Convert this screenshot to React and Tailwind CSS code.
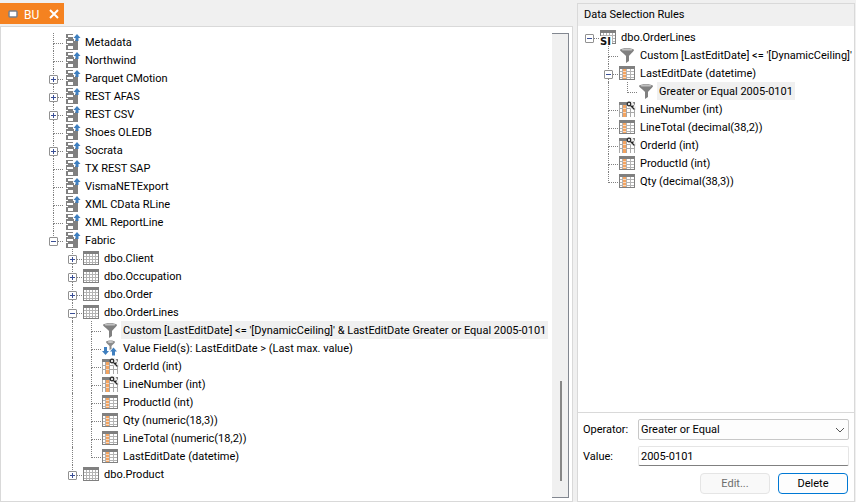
import React, { useState } from "react";

const sourceTree = [
  { type: "source", label: "Metadata" },
  { type: "source", label: "Northwind" },
  { type: "source", label: "Parquet CMotion", state: "closed" },
  { type: "source", label: "REST AFAS", state: "closed" },
  { type: "source", label: "REST CSV", state: "closed" },
  { type: "source", label: "Shoes OLEDB" },
  { type: "source", label: "Socrata", state: "closed" },
  { type: "source", label: "TX REST SAP" },
  { type: "source", label: "VismaNETExport" },
  { type: "source", label: "XML CData RLine" },
  { type: "source", label: "XML ReportLine" },
  {
    type: "source",
    label: "Fabric",
    state: "open",
    children: [
      { type: "table", label: "dbo.Client", state: "closed" },
      { type: "table", label: "dbo.Occupation", state: "closed" },
      { type: "table", label: "dbo.Order", state: "closed" },
      {
        type: "table",
        label: "dbo.OrderLines",
        state: "open",
        children: [
          {
            type: "filter",
            label: "Custom [LastEditDate] <= '[DynamicCeiling]' & LastEditDate Greater or Equal 2005-0101",
            selected: true,
          },
          { type: "increment", label: "Value Field(s): LastEditDate > (Last max. value)" },
          { type: "key", label: "OrderId (int)" },
          { type: "key", label: "LineNumber (int)" },
          { type: "column", label: "ProductId (int)" },
          { type: "column", label: "Qty (numeric(18,3))" },
          { type: "column", label: "LineTotal (numeric(18,2))" },
          { type: "column", label: "LastEditDate (datetime)" },
        ],
      },
      { type: "table", label: "dbo.Product", state: "closed" },
    ],
  },
];

const ruleTree = [
  {
    type: "si",
    label: "dbo.OrderLines",
    state: "open",
    root: true,
    children: [
      { type: "filter", label: "Custom [LastEditDate] <= '[DynamicCeiling]'" },
      {
        type: "column",
        label: "LastEditDate (datetime)",
        state: "open",
        children: [{ type: "filter", label: "Greater or Equal 2005-0101", selected: true }],
      },
      { type: "key", label: "LineNumber (int)" },
      { type: "column", label: "LineTotal (decimal(38,2))" },
      { type: "key", label: "OrderId (int)" },
      { type: "column", label: "ProductId (int)" },
      { type: "column", label: "Qty (decimal(38,3))" },
    ],
  },
];

const Grid = ({ column }) => (
  <g shapeRendering="crispEdges">
    <rect x="1" y="2" width="16" height="14" fill="#808080" />
    <rect x="2" y="5" width="14" height="10" fill="#fff" />
    {column && <rect x="5" y="5" width="3" height="10" fill="#f4a460" />}
    <path
      d={
        column
          ? "M4.5 5v10M8.5 5v10M12.5 5v10M2 7.5h3M2 10.5h3M2 13.5h3M8 7.5h8M8 10.5h8M8 13.5h8"
          : "M4.5 5v10M7.5 5v10M10.5 5v10M13.5 5v10M2 7.5h14M2 10.5h14M2 13.5h14"
      }
      stroke="#b4b4b4"
    />
    {column && <path d="M5 7.5h3M5 10.5h3M5 13.5h3" stroke="#fbd9bd" />}
  </g>
);

const NodeIcon = ({ type }) => (
  <svg width="18" height="18" viewBox="0 0 18 18" className="shrink-0" aria-hidden="true">
    {type === "source" && (
      <>
        <path d="M3 1h9v6h3v10H3v-5h2v-1H3V6h2V5H3z" fill="#808080" shapeRendering="crispEdges" />
        <path d="M5 2h5v2H5zM4 8h6v2H4zM5 13h5v3H5z" fill="#fff" shapeRendering="crispEdges" />
        <path d="M10 0h8v8h-2V7h-4v1h-1V6h-1z" fill="#fff" />
        <path d="M14 1l3.500 4h-2v3h-3V5h-2z" fill="#3f7fbf" />
      </>
    )}
    {type === "table" && <Grid />}
    {type === "column" && <Grid column />}
    {type === "key" && (
      <>
        <g shapeRendering="crispEdges">
          <rect x="1" y="2" width="16" height="3" fill="#808080" />
          <rect x="5" y="5" width="3" height="12" fill="#f4a460" />
          <path d="M1.500 5v12M4.500 5v12M8.500 5v12M12.500 7v10M16.500 5v12M1 8.500h4M1 12.500h4M8 8.500h9M8 12.500h9" stroke="#a8a8a8" />
          <path d="M5 8.500h3M5 12.500h3" stroke="#fbd9bd" />
        </g>
        <path d="M9 1h5l4 6v3h-3l-6-4z" fill="#eee" />
        <circle cx="11" cy="4" r="1.800" fill="#ddd" stroke="#222" strokeWidth="1.200" />
        <path d="M12.500 5.500l4 4M14 7l1.500-1.500" stroke="#222" strokeWidth="1.200" fill="none" />
      </>
    )}
    {type === "si" && (
      <>
        <Grid />
        <path d="M0 8h13v10H0z" fill="#fff" />
        <text x="1" y="17" fontSize="10" fontWeight="700" fill="#111" fontFamily="DejaVu Sans, sans-serif">
          SI
        </text>
      </>
    )}
    {type === "filter" && (
      <>
        <path d="M2 4c0-2.400 14-2.400 14 0 0 1-3 3.500-5 6v5l-3 2v-7C6 7.500 2 5 2 4z" fill="#808080" />
        <ellipse cx="9" cy="3.700" rx="5.500" ry="0.900" fill="#c0c0c0" />
      </>
    )}
    {type === "increment" && (
      <>
        <path d="M5 3c0-2 9-2 9 0 0 1-2 2-3.500 4v3l-2 1V7C7 5 5 4 5 3z" fill="#8a8a8a" />
        <ellipse cx="9.500" cy="3" rx="3" ry="0.700" fill="#ddd" />
        <path d="M3 8h3v4h2l-3.500 4L1 12h2zM11 16.500h3v-4h2l-3.500-4-3.500 4h2z" fill="#3f7fbf" />
      </>
    )}
  </svg>
);

const Expander = ({ open, label, onClick }) => (
  <button
    type="button"
    onClick={onClick}
    aria-expanded={open}
    aria-label={`${open ? "Collapse" : "Expand"} ${label}`}
    className="absolute left-[5px] top-[6px] size-[9px] rounded-[1px] border border-[#919191] bg-white"
  >
    <svg viewBox="0 0 7 7" className="block size-[7px]" aria-hidden="true">
      <path d={open ? "M1 3.5h5" : "M1 3.5h5M3.5 1v5"} stroke="#3a4f96" />
    </svg>
  </button>
);

// lines holds one flag per ancestor: true where its vertical guide goes on
const TreeNode = ({ node, lines, last }) => {
  const [open, setOpen] = useState(node.state === "open");

  return (
    <li>
      <div className="flex h-[18px]">
        {lines.map((on, i) => (
          <span key={i} className="flex w-[19px] shrink-0 justify-end">
            <span className={on ? "w-[10px] border-l border-dotted border-[#808080]" : "w-[10px]"} />
          </span>
        ))}
        <span className="relative flex w-[19px] shrink-0 flex-col items-end">
          <span
            className={
              node.root
                ? "h-[11px] w-[10px] border-b border-dotted border-[#808080]"
                : "h-[11px] w-[10px] border-b border-l border-dotted border-[#808080]"
            }
          />
          {!last && <span className="w-[10px] flex-1 border-l border-dotted border-[#808080]" />}
          {node.state && <Expander open={open} label={node.label} onClick={() => setOpen(!open)} />}
        </span>
        <NodeIcon type={node.type} />
        <span
          className={
            node.selected
              ? "ml-[2px] whitespace-nowrap bg-[#f0f0f0] px-[2px] pt-[2px] leading-4"
              : "ml-[2px] whitespace-nowrap px-[2px] pt-[2px] leading-4"
          }
        >
          {node.label}
        </span>
      </div>
      {open && node.children && <Tree nodes={node.children} lines={[...lines, !last]} />}
    </li>
  );
};

const Tree = ({ nodes, lines = [] }) => (
  <ul>
    {nodes.map((node, i) => (
      <TreeNode key={node.label} node={node} lines={lines} last={i === nodes.length - 1} />
    ))}
  </ul>
);

const RuleForm = () => {
  const [value, setValue] = useState("2005-0101");

  return (
    <form className="border-t border-[#d9d9d9] px-[5px] pb-[7px] pt-[6px]" onSubmit={(e) => e.preventDefault()}>
      <div className="grid grid-cols-[55px_1fr] items-center gap-y-[6px]">
        <label htmlFor="operator" className="pt-[2px]">
          Operator:
        </label>
        <div className="relative">
          <select
            id="operator"
            className="block h-[21px] w-full appearance-none rounded-[2px] border border-[#c8c8c8] bg-[#fdfdfd] px-[2px] pt-[2px]"
          >
            <option>Greater or Equal</option>
            <option>Less or Equal</option>
            <option>Equal</option>
          </select>
          <svg
            viewBox="0 0 10 6"
            className="pointer-events-none absolute right-1 top-2 h-[6px] w-[10px]"
            fill="none"
            stroke="#555"
            aria-hidden="true"
          >
            <path d="M1 1l4 4 4-4" />
          </svg>
        </div>
        <label htmlFor="value" className="pt-[2px]">
          Value:
        </label>
        <input
          id="value"
          type="text"
          value={value}
          onChange={(e) => setValue(e.target.value)}
          className="h-5 w-full rounded-[2px] border border-[#e5e5e5] border-b-[#808080] bg-white px-[2px]"
        />
      </div>
      <div className="mt-[7px] flex justify-end gap-2 pr-px">
        <button
          type="button"
          disabled
          className="h-[21px] w-[70px] rounded border border-[#e5e5e5] bg-[#f9f9f9] pt-[2px] text-[#6d6d6d]"
        >
          Edit...
        </button>
        <button type="button" className="h-[21px] w-[70px] rounded border border-[#0078d4] bg-[#fdfdfd] pt-[2px]">
          Delete
        </button>
      </div>
    </form>
  );
};

export default function App() {
  return (
    <div className="flex min-h-screen gap-1 bg-[#f0f0f0] pr-px pt-[3px] font-[Roboto,'Liberation_Sans',sans-serif] text-[11px] text-black">
      <main className="flex min-w-0 flex-1 flex-col">
        <div className="flex">
          <div className="flex h-[21px] items-center bg-[#f58220] pl-2 pr-[5px] text-white">
            <svg width="10" height="8" viewBox="0 0 10 8" aria-hidden="true">
              <rect x="1" y="1" width="8" height="6" rx="1" fill="#fff" stroke="#77808a" strokeWidth="1.500" />
            </svg>
            <span className="ml-[6px] pt-[2px] text-xs">BU</span>
            <button type="button" aria-label="Close BU" className="ml-[10px]">
              <svg width="10" height="10" viewBox="0 0 10 10" stroke="#fff" strokeWidth="2" aria-hidden="true">
                <path d="M1 1l8 8M9 1l-8 8" />
              </svg>
            </button>
          </div>
        </div>
        <section className="mt-[2px] flex flex-1 border border-[#d9d9d9] bg-white pb-[3px] pr-[3px] pt-[6px]">
          <div className="min-w-0 flex-1 overflow-hidden pl-[43px]">
            <Tree nodes={sourceTree} />
          </div>
          <div className="flex w-[17px] flex-col justify-end border-y border-r border-[#828790] bg-[#f0f0f0] pb-4 pl-2">
            <div className="h-[100px] w-[2px] bg-[#868686]" />
          </div>
        </section>
      </main>
      <aside className="flex w-[278px] shrink-0 flex-col border border-[#d9d9d9] bg-white">
        <h2 className="h-[22px] bg-[#f0f0f0] pl-[6px] leading-[21px]">Data Selection Rules</h2>
        <div className="flex-1 overflow-hidden pl-[2px] pt-[2px]">
          <Tree nodes={ruleTree} />
        </div>
        <RuleForm />
      </aside>
    </div>
  );
}
